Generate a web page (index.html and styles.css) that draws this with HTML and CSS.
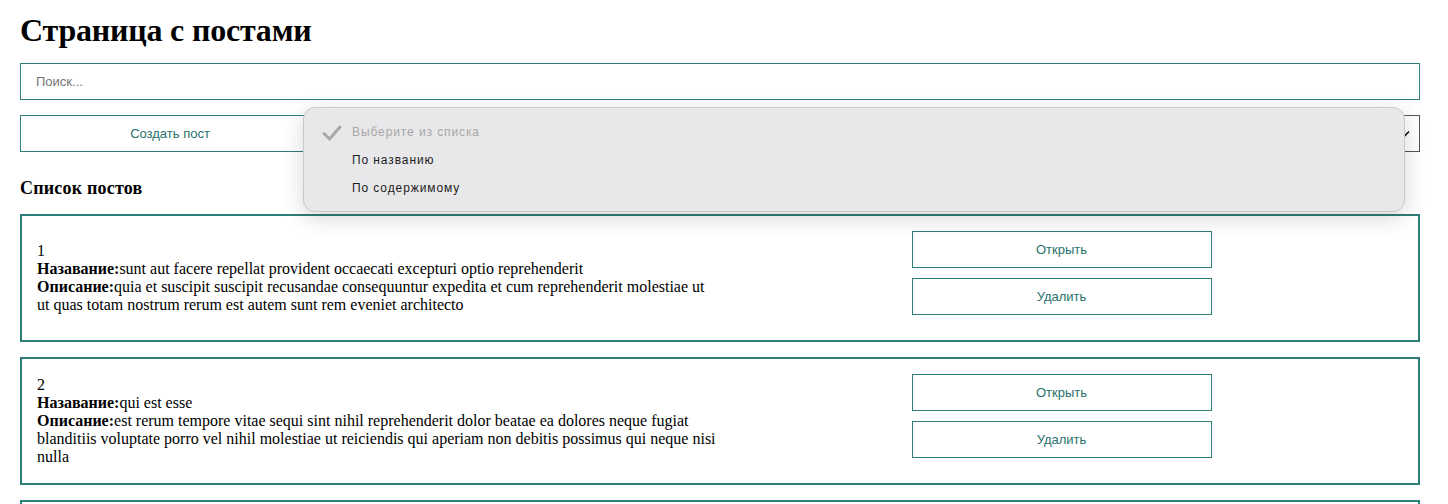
FILE: index.html
```html
<!DOCTYPE html>
<html lang="ru">
<head>
  <meta charset="UTF-8">
  <title>Страница с постами</title>
  <link rel="stylesheet" href="styles.css">
</head>
<body>
  <h1 class="page-title">Страница с постами</h1>
  <input class="search" type="text" placeholder="Поиск...">

  <div class="toolbar">
    <button class="btn create-btn">Создать пост</button>
    <div class="select-box">
      <svg class="select-arrow" width="14" height="14" viewBox="0 0 14 14">
        <path d="M2 4.5 L7 9.5 L12 4.5" fill="none" stroke="#111" stroke-width="1.6"/>
      </svg>
    </div>

    <div class="dropdown">
      <div class="dropdown-item placeholder">
        <svg class="check" width="20" height="16" viewBox="0 0 20 16">
          <path d="M2 8.5 L7.5 14 L18 2" fill="none" stroke="#a9a9aa" stroke-width="3" stroke-linecap="round" stroke-linejoin="round"/>
        </svg>
        Выберите из списка
      </div>
      <div class="dropdown-item">По названию</div>
      <div class="dropdown-item">По содержимому</div>
    </div>
  </div>

  <h3 class="list-title">Список постов</h3>

  <div class="post">
    <div class="post-text">
      <div>1</div>
      <div><b>Назавание:</b>sunt aut facere repellat provident occaecati excepturi optio reprehenderit</div>
      <div><b>Описание:</b>quia et suscipit suscipit recusandae consequuntur expedita et cum reprehenderit molestiae ut ut quas totam nostrum rerum est autem sunt rem eveniet architecto</div>
    </div>
    <div class="post-btns">
      <button class="btn">Открыть</button>
      <button class="btn">Удалить</button>
    </div>
  </div>

  <div class="post">
    <div class="post-text">
      <div>2</div>
      <div><b>Назавание:</b>qui est esse</div>
      <div><b>Описание:</b>est rerum tempore vitae sequi sint nihil reprehenderit dolor beatae ea dolores neque fugiat blanditiis voluptate porro vel nihil molestiae ut reiciendis qui aperiam non debitis possimus qui neque nisi nulla</div>
    </div>
    <div class="post-btns">
      <button class="btn">Открыть</button>
      <button class="btn">Удалить</button>
    </div>
  </div>

  <div class="post">
    <div class="post-text">
      <div>3</div>
      <div><b>Назавание:</b>ea molestias quasi exercitationem repellat qui ipsa sit aut</div>
      <div><b>Описание:</b>et iusto sed quo iure voluptatem occaecati omnis eligendi aut ad voluptatem doloribus vel accusantium quis pariatur molestiae porro eius odio et labore et velit aut</div>
    </div>
    <div class="post-btns">
      <button class="btn">Открыть</button>
      <button class="btn">Удалить</button>
    </div>
  </div>
</body>
</html>
```

FILE: styles.css
```css
body {
  margin: 0;
  padding: 0 28px 0 20px;
  font-family: "Liberation Serif", "Times New Roman", serif;
  font-size: 16px;
  line-height: 18px;
  color: #000;
  background: #fff;
}

.page-title {
  font-size: 32px;
  line-height: 37px;
  letter-spacing: -0.2px;
  margin: 12px 0 14px;
}

.search {
  display: block;
  width: 100%;
  height: 37px;
  box-sizing: border-box;
  border: 1px solid #2f7d78;
  padding: 0 15px;
  font-family: "Liberation Sans", Arial, sans-serif;
  font-size: 13px;
  outline: none;
}

.search::placeholder {
  color: #757575;
}

.toolbar {
  position: relative;
  display: flex;
  margin-top: 15px;
}

.btn {
  display: block;
  width: 300px;
  height: 37px;
  box-sizing: border-box;
  background: #fff;
  border: 1px solid #2f7d78;
  color: #28716c;
  font-family: "Liberation Sans", Arial, sans-serif;
  font-size: 13px;
  cursor: pointer;
}

.select-box {
  flex: 1;
  height: 37px;
  box-sizing: border-box;
  border: 1px solid #555;
  position: relative;
}

.select-arrow {
  position: absolute;
  right: 8px;
  top: 11px;
}

.dropdown {
  position: absolute;
  left: 283px;
  top: -8px;
  width: 1102px;
  height: 105px;
  box-sizing: border-box;
  padding-top: 10px;
  background: #e8e7e9;
  border: 1px solid #c9c8ca;
  border-radius: 12px;
  box-shadow: 0 6px 22px rgba(0, 0, 0, 0.16);
  font-family: "Liberation Sans", Arial, sans-serif;
  font-size: 12px;
  letter-spacing: 0.9px;
  color: #1d1d1d;
}

.dropdown-item {
  position: relative;
  height: 28px;
  line-height: 28px;
  padding-left: 48px;
}

.dropdown-item.placeholder {
  color: #a7a7a8;
}

.check {
  position: absolute;
  left: 18px;
  top: 7px;
}

.list-title {
  font-size: 18px;
  line-height: 21px;
  letter-spacing: 0.2px;
  margin: 26px 0 15px;
}

.post {
  display: flex;
  align-items: center;
  border: 2px solid #2f7d78;
  padding: 15px;
  margin-bottom: 15px;
}

.post-text {
  width: 50%;
}

.post-btns {
  width: 50%;
  display: flex;
  flex-direction: column;
  align-items: center;
}

.post-btns .btn {
  margin-bottom: 10px;
}
```
